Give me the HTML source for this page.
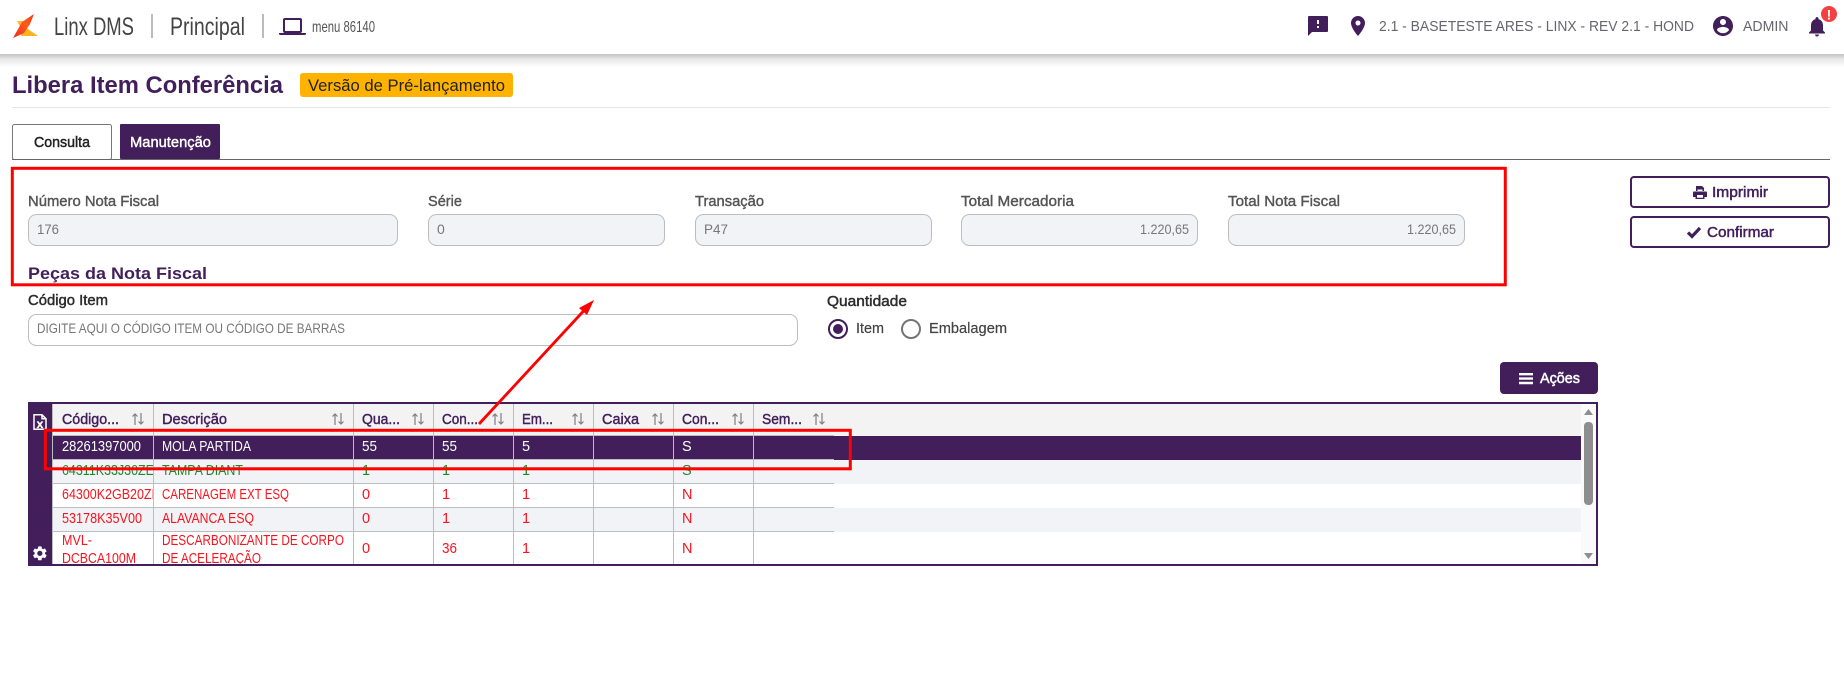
<!DOCTYPE html>
<html lang="pt-BR"><head><meta charset="utf-8"><title>Libera Item Conferência</title>
<style>
html,body{margin:0;padding:0;background:#fff;width:1844px;height:678px;overflow:hidden}
svg{display:block}
text{font-family:"Liberation Sans",sans-serif;font-size:14.5px;white-space:pre}
.lab{font-size:14.5px;fill:#555;stroke:#555;stroke-width:.4px}
.inp{font-size:14px;fill:#777}
.dark{font-size:14.5px;fill:#2c2c2c;stroke:#2c2c2c;stroke-width:.45px}
.th{font-size:15px;fill:#421f5a;stroke:#421f5a;stroke-width:.45px}
.w{fill:#fff}.g{fill:#1f8a2a}.r{fill:#f7141e}
.btn{font-size:15px;fill:#421f5a;stroke:#421f5a;stroke-width:.5px}
.hd{font-size:14.5px;fill:#66666e}
.sort{fill:none;stroke:#7d7d85;stroke-width:1.2}
.gl{stroke:#bdbdc0;stroke-width:1}
</style></head><body>
<svg width="1844" height="678" viewBox="0 0 1844 678" xmlns="http://www.w3.org/2000/svg">
<defs>
<linearGradient id="sh" x1="0" y1="0" x2="0" y2="1"><stop offset="0" stop-color="#000" stop-opacity=".24"/><stop offset=".4" stop-color="#000" stop-opacity=".09"/><stop offset="1" stop-color="#000" stop-opacity="0"/></linearGradient>
<linearGradient id="lg" x1="0" y1="1" x2="1" y2="0"><stop offset="0" stop-color="#ee2a1e"/><stop offset=".6" stop-color="#fb5c1a"/><stop offset="1" stop-color="#f5331c"/></linearGradient>
<clipPath id="tb"><rect x="53" y="404" width="1528" height="160"/></clipPath>
<clipPath id="c1"><rect x="53" y="436" width="100" height="128"/></clipPath>
</defs>
<rect width="1844" height="678" fill="#fff"/>
<!-- header -->
<rect x="0" y="54" width="1844" height="13" fill="url(#sh)"/>
<rect x="0" y="0" width="1844" height="54" fill="#fff"/>
<polygon points="17,21 28,21 24,29 19,25" fill="#fdb92e"/>
<polygon points="25,27 38,36 22,36 19,33" fill="#fdb31f"/>
<polygon points="34,14 22,22 13,38 24,33 30,24" fill="url(#lg)"/>
<text x="54" y="35" style="font-size:25px" fill="#444" textLength="80" lengthAdjust="spacingAndGlyphs">Linx DMS</text>
<rect x="151" y="14" width="2" height="24" fill="#bcbcbc"/>
<text x="170" y="35" style="font-size:25px" fill="#444" textLength="75" lengthAdjust="spacingAndGlyphs">Principal</text>
<rect x="262" y="14" width="2" height="24" fill="#bcbcbc"/>
<rect x="284" y="19" width="17" height="13" rx="1" fill="none" stroke="#421f5a" stroke-width="2"/>
<path d="M279 33h27v.5a1.500 1.500 0 0 1-1.500 1.500h-24a1.500 1.500 0 0 1-1.500-1.500z" fill="#421f5a"/>
<text x="312" y="32" style="font-size:16px" fill="#555" textLength="63" lengthAdjust="spacingAndGlyphs">menu 86140</text>
<path transform="translate(1306,14)" fill="#421f5a" d="M21 2H3c-.6 0-1 .4-1 1v19l4-4h15c.6 0 1-.4 1-1V3c0-.6-.4-1-1-1zm-8 12h-2v-2h2v2zm0-4h-2V6h2v4z"/>
<path transform="translate(1346,14)" fill="#421f5a" d="M12 2C8.130 2 5 5.130 5 9c0 5.250 7 13 7 13s7-7.750 7-13c0-3.870-3.130-7-7-7zm0 9.500c-1.380 0-2.500-1.120-2.500-2.500s1.120-2.500 2.500-2.500 2.500 1.120 2.500 2.500-1.120 2.500-2.500 2.500z"/>
<text class="hd" x="1379" y="31" textLength="315" lengthAdjust="spacingAndGlyphs">2.1 - BASETESTE ARES - LINX - REV 2.1 - HOND</text>
<path transform="translate(1711,14)" fill="#421f5a" d="M12 2C6.480 2 2 6.480 2 12s4.480 10 10 10 10-4.480 10-10S17.520 2 12 2zm0 3c1.660 0 3 1.340 3 3s-1.340 3-3 3-3-1.340-3-3 1.340-3 3-3zm0 14.200c-2.500 0-4.710-1.280-6-3.220.030-1.990 4-3.080 6-3.080 1.990 0 5.970 1.090 6 3.080-1.290 1.940-3.500 3.220-6 3.220z"/>
<text class="hd" x="1743" y="31" textLength="45.500" lengthAdjust="spacingAndGlyphs">ADMIN</text>
<path transform="translate(1805,14.500)" fill="#421f5a" d="M12 22c1.100 0 2-.9 2-2h-4c0 1.100.89 2 2 2zm6-6v-5c0-3.070-1.640-5.640-4.500-6.320V4c0-.83-.67-1.500-1.500-1.500s-1.500.67-1.500 1.500v.68C7.630 5.360 6 7.920 6 11v5l-2 2v1h16v-1l-2-2z"/>
<circle cx="1829" cy="14" r="8" fill="#f44040"/>
<text x="1829" y="19.500" text-anchor="middle" style="font-size:14px;font-weight:700" fill="#fff">!</text>
<!-- title -->
<text x="12" y="93" style="font-size:24px;font-weight:700" fill="#421f5a" textLength="271" lengthAdjust="spacingAndGlyphs">Libera Item Conferência</text>
<rect x="300" y="73" width="213" height="24" rx="3" fill="#ffb300"/>
<text x="308" y="91" style="font-size:17px" fill="#222" textLength="197" lengthAdjust="spacingAndGlyphs">Versão de Pré-lançamento</text>
<rect x="12" y="107" width="1818" height="1" fill="#e6e6e6"/>
<!-- tabs -->
<rect x="12.500" y="124.500" width="99" height="35" rx="2" fill="#fff" stroke="#777"/>
<rect x="120" y="124" width="100" height="35" rx="1" fill="#421f5a"/>
<rect x="12" y="159" width="1818" height="1" fill="#666"/>
<text x="34" y="147" style="font-size:14.500px" fill="#222" stroke="#222" stroke-width=".45" textLength="56" lengthAdjust="spacingAndGlyphs">Consulta</text>
<text x="130" y="147" style="font-size:14.500px" fill="#fff" stroke="#fff" stroke-width=".4" textLength="81" lengthAdjust="spacingAndGlyphs">Manutenção</text>
<!-- fields -->
<text class="lab" x="28" y="206" textLength="131" lengthAdjust="spacingAndGlyphs">Número Nota Fiscal</text>
<text class="lab" x="428" y="206" textLength="34" lengthAdjust="spacingAndGlyphs">Série</text>
<text class="lab" x="695" y="206" textLength="69" lengthAdjust="spacingAndGlyphs">Transação</text>
<text class="lab" x="961" y="206" textLength="113" lengthAdjust="spacingAndGlyphs">Total Mercadoria</text>
<text class="lab" x="1228" y="206" textLength="112" lengthAdjust="spacingAndGlyphs">Total Nota Fiscal</text>
<g fill="#f2f3f7" stroke="#bdbdbd">
<rect x="28.500" y="214.500" width="369" height="31" rx="8"/>
<rect x="428.500" y="214.500" width="236" height="31" rx="8"/>
<rect x="695.500" y="214.500" width="236" height="31" rx="8"/>
<rect x="961.500" y="214.500" width="236" height="31" rx="8"/>
<rect x="1228.500" y="214.500" width="236" height="31" rx="8"/>
</g>
<text class="inp" x="37" y="234" textLength="22" lengthAdjust="spacingAndGlyphs">176</text>
<text class="inp" x="437" y="234">0</text>
<text class="inp" x="704" y="234" textLength="24" lengthAdjust="spacingAndGlyphs">P47</text>
<text class="inp" x="1140" y="234" textLength="49" lengthAdjust="spacingAndGlyphs">1.220,65</text>
<text class="inp" x="1407" y="234" textLength="49" lengthAdjust="spacingAndGlyphs">1.220,65</text>
<text x="28" y="279" style="font-size:17px;font-weight:700" fill="#421f5a" textLength="179" lengthAdjust="spacingAndGlyphs">Peças da Nota Fiscal</text>
<text class="dark" x="28" y="305" textLength="80" lengthAdjust="spacingAndGlyphs">Código Item</text>
<rect x="28.500" y="314.500" width="769" height="31" rx="8" fill="#fff" stroke="#bdbdbd"/>
<text class="inp" x="37" y="333" textLength="308" lengthAdjust="spacingAndGlyphs">DIGITE AQUI O CÓDIGO ITEM OU CÓDIGO DE BARRAS</text>
<text class="dark" x="827" y="306" textLength="80" lengthAdjust="spacingAndGlyphs">Quantidade</text>
<circle cx="838" cy="329" r="9" fill="#fff" stroke="#421f5a" stroke-width="2"/>
<circle cx="838" cy="329" r="5" fill="#421f5a"/>
<text x="856" y="333" style="font-size:14.500px" fill="#444" stroke="#444" stroke-width=".2" textLength="28" lengthAdjust="spacingAndGlyphs">Item</text>
<circle cx="911" cy="329" r="9" fill="#fff" stroke="#757575" stroke-width="2"/>
<text x="929" y="333" style="font-size:14.500px" fill="#444" stroke="#444" stroke-width=".2" textLength="78" lengthAdjust="spacingAndGlyphs">Embalagem</text>
<!-- side buttons -->
<rect x="1631" y="177" width="198" height="30" rx="3" fill="#fff" stroke="#421f5a" stroke-width="2"/>
<path fill="#421f5a" fill-rule="evenodd" d="M1696 191v-5h6l2 2v3h-1.500v-1.500h-5V191zM1694 191.500h12a1 1 0 0 1 1 1v4.500h-2.500v2h-9v-2H1693v-4.500a1 1 0 0 1 1-1zM1697 195v2.800h6V195z"/>
<text class="btn" x="1712" y="197" textLength="56" lengthAdjust="spacingAndGlyphs">Imprimir</text>
<rect x="1631" y="217" width="198" height="30" rx="3" fill="#fff" stroke="#421f5a" stroke-width="2"/>
<path fill="none" stroke="#421f5a" stroke-width="3.200" d="M1688 232.500l4 4 8-8.500"/>
<text class="btn" x="1707" y="237" textLength="67" lengthAdjust="spacingAndGlyphs">Confirmar</text>
<rect x="1500" y="362" width="98" height="32" rx="4" fill="#421f5a"/>
<path fill="#fff" d="M1519 373h14v2.400h-14zM1519 377.400h14v2.400h-14zM1519 381.800h14v2.400h-14z"/>
<text x="1540" y="383" style="font-size:15px" fill="#fff" stroke="#fff" stroke-width=".5" textLength="40" lengthAdjust="spacingAndGlyphs">Ações</text>
<!-- table -->
<rect x="28" y="402" width="1570" height="164" fill="#421f5a"/>
<rect x="52" y="404" width="1544" height="160" fill="#fff"/>
<rect x="1581" y="404" width="15" height="160" fill="#fafafa"/>
<rect x="53" y="404" width="1528" height="32" fill="#f3f3f3"/>
<rect x="53" y="436" width="1528" height="24" fill="#421f5a"/>
<rect x="53" y="460" width="1528" height="24" fill="#f2f3f7"/>
<rect x="53" y="508" width="1528" height="24" fill="#f2f3f7"/>
<g class="gl">
<path d="M53 435.500H834M53 459.500H834M53 483.500H834M53 507.500H834M53 531.500H834"/>
<path d="M52.500 404V564M153.500 404V564M353.500 404V564M433.500 404V564M513.500 404V564M593.500 404V564M673.500 404V564M753.500 404V564"/>
</g>
<!-- excel icon -->
<path fill="none" stroke="#fff" stroke-width="1.500" d="M34 414.800h8l4 4v10.500H34zM42 414.800v4h4"/>
<text x="40" y="428" text-anchor="middle" style="font-size:12px;font-weight:700" fill="#fff" stroke="#fff" stroke-width=".3">x</text>
<!-- gear -->
<path transform="translate(31.200,544.700) scale(.72)" fill="#fff" d="M19.140 12.940c.040-.3.060-.61.060-.94s-.020-.64-.070-.94l2.030-1.580a.49.49 0 0 0 .12-.61l-1.920-3.320a.49.49 0 0 0-.59-.22l-2.390.960c-.5-.38-1.030-.7-1.620-.94l-.36-2.540a.48.48 0 0 0-.48-.41h-3.840a.47.47 0 0 0-.47.410l-.36 2.540c-.59.240-1.130.57-1.620.94l-2.390-.960a.49.49 0 0 0-.59.220L2.740 8.870a.48.48 0 0 0 .12.610l2.030 1.580c-.050.3-.090.630-.090.940s.020.640.070.940l-2.030 1.580a.49.49 0 0 0-.12.610l1.920 3.320c.12.220.37.290.59.220l2.390-.960c.5.380 1.030.7 1.620.94l.36 2.540c.050.240.24.410.48.410h3.840c.24 0 .44-.17.470-.41l.36-2.540c.59-.240 1.130-.56 1.620-.94l2.390.960c.22.080.47 0 .59-.22l1.920-3.320a.48.48 0 0 0-.12-.61zM12 15.600a3.600 3.600 0 1 1 0-7.200 3.600 3.600 0 0 1 0 7.200z"/>
<!-- headers -->
<text class="th" x="62" y="424" textLength="57" lengthAdjust="spacingAndGlyphs">Código...</text>
<text class="th" x="162" y="424" textLength="65" lengthAdjust="spacingAndGlyphs">Descrição</text>
<text class="th" x="362" y="424" textLength="38" lengthAdjust="spacingAndGlyphs">Qua...</text>
<text class="th" x="442" y="424" textLength="36" lengthAdjust="spacingAndGlyphs">Con...</text>
<text class="th" x="522" y="424" textLength="31" lengthAdjust="spacingAndGlyphs">Em...</text>
<text class="th" x="602" y="424" textLength="37" lengthAdjust="spacingAndGlyphs">Caixa</text>
<text class="th" x="682" y="424" textLength="37" lengthAdjust="spacingAndGlyphs">Con...</text>
<text class="th" x="762" y="424" textLength="40" lengthAdjust="spacingAndGlyphs">Sem...</text>
<g class="sort">
<path d="M135 425V414M132.500 416.500L135 414l2.500 2.500M141 413v11M138.500 421.500l2.500 2.500 2.500-2.500"/>
<path transform="translate(200,0)" d="M135 425V414M132.500 416.500L135 414l2.500 2.500M141 413v11M138.500 421.500l2.500 2.500 2.500-2.500"/>
<path transform="translate(280,0)" d="M135 425V414M132.500 416.500L135 414l2.500 2.500M141 413v11M138.500 421.500l2.500 2.500 2.500-2.500"/>
<path transform="translate(360,0)" d="M135 425V414M132.500 416.500L135 414l2.500 2.500M141 413v11M138.500 421.500l2.500 2.500 2.500-2.500"/>
<path transform="translate(440,0)" d="M135 425V414M132.500 416.500L135 414l2.500 2.500M141 413v11M138.500 421.500l2.500 2.500 2.500-2.500"/>
<path transform="translate(520,0)" d="M135 425V414M132.500 416.500L135 414l2.500 2.500M141 413v11M138.500 421.500l2.500 2.500 2.500-2.500"/>
<path transform="translate(600,0)" d="M135 425V414M132.500 416.500L135 414l2.500 2.500M141 413v11M138.500 421.500l2.500 2.500 2.500-2.500"/>
<path transform="translate(681,0)" d="M135 425V414M132.500 416.500L135 414l2.500 2.500M141 413v11M138.500 421.500l2.500 2.500 2.500-2.500"/>
</g>
<!-- rows -->
<g clip-path="url(#tb)">
<g class="w">
<text x="62" y="451" textLength="79" lengthAdjust="spacingAndGlyphs">28261397000</text>
<text x="162" y="451" textLength="89" lengthAdjust="spacingAndGlyphs">MOLA PARTIDA</text>
<text x="362" y="451" textLength="15" lengthAdjust="spacingAndGlyphs">55</text>
<text x="442" y="451" textLength="15" lengthAdjust="spacingAndGlyphs">55</text>
<text x="522" y="451">5</text>
<text x="682" y="451">S</text>
</g>
<g class="g">
<text x="62" y="475" clip-path="url(#c1)" textLength="92" lengthAdjust="spacingAndGlyphs">64311K33J30ZE</text>
<text x="162" y="475" textLength="81" lengthAdjust="spacingAndGlyphs">TAMPA DIANT</text>
<text x="362" y="475">1</text><text x="442" y="475">1</text><text x="522" y="475">1</text><text x="682" y="475">S</text>
</g>
<g class="r">
<text x="62" y="499" clip-path="url(#c1)" textLength="93" lengthAdjust="spacingAndGlyphs">64300K2GB20ZI</text>
<text x="162" y="499" textLength="127" lengthAdjust="spacingAndGlyphs">CARENAGEM EXT ESQ</text>
<text x="362" y="499">0</text><text x="442" y="499">1</text><text x="522" y="499">1</text><text x="682" y="499">N</text>
<text x="62" y="523" textLength="80" lengthAdjust="spacingAndGlyphs">53178K35V00</text>
<text x="162" y="523" textLength="92" lengthAdjust="spacingAndGlyphs">ALAVANCA ESQ</text>
<text x="362" y="523">0</text><text x="442" y="523">1</text><text x="522" y="523">1</text><text x="682" y="523">N</text>
<text x="62" y="545" textLength="30" lengthAdjust="spacingAndGlyphs">MVL-</text>
<text x="62" y="563" textLength="74" lengthAdjust="spacingAndGlyphs">DCBCA100M</text>
<text x="162" y="545" textLength="182" lengthAdjust="spacingAndGlyphs">DESCARBONIZANTE DE CORPO</text>
<text x="162" y="563" textLength="99" lengthAdjust="spacingAndGlyphs">DE ACELERAÇÃO</text>
<text x="362" y="553">0</text><text x="442" y="553" textLength="15" lengthAdjust="spacingAndGlyphs">36</text><text x="522" y="553">1</text><text x="682" y="553">N</text>
</g>
</g>
<!-- scrollbar -->
<polygon points="1584,415 1593,415 1588.500,409" fill="#8e8e8e"/>
<rect x="1584" y="422" width="9" height="83" rx="4" fill="#8e8e8e"/>
<polygon points="1584,553 1593,553 1588.500,559" fill="#8e8e8e"/>
<!-- annotations -->
<rect x="12.300" y="168.300" width="1493" height="116.500" fill="none" stroke="#f00" stroke-width="3"/>
<rect x="45.300" y="430.300" width="805" height="38.500" fill="none" stroke="#f00" stroke-width="3"/>
<path d="M479 424L590 304" stroke="#f00" stroke-width="2.800" fill="none"/>
<polygon points="594,300 579,308 587,315" fill="#f00"/>
</svg>
</body></html>
